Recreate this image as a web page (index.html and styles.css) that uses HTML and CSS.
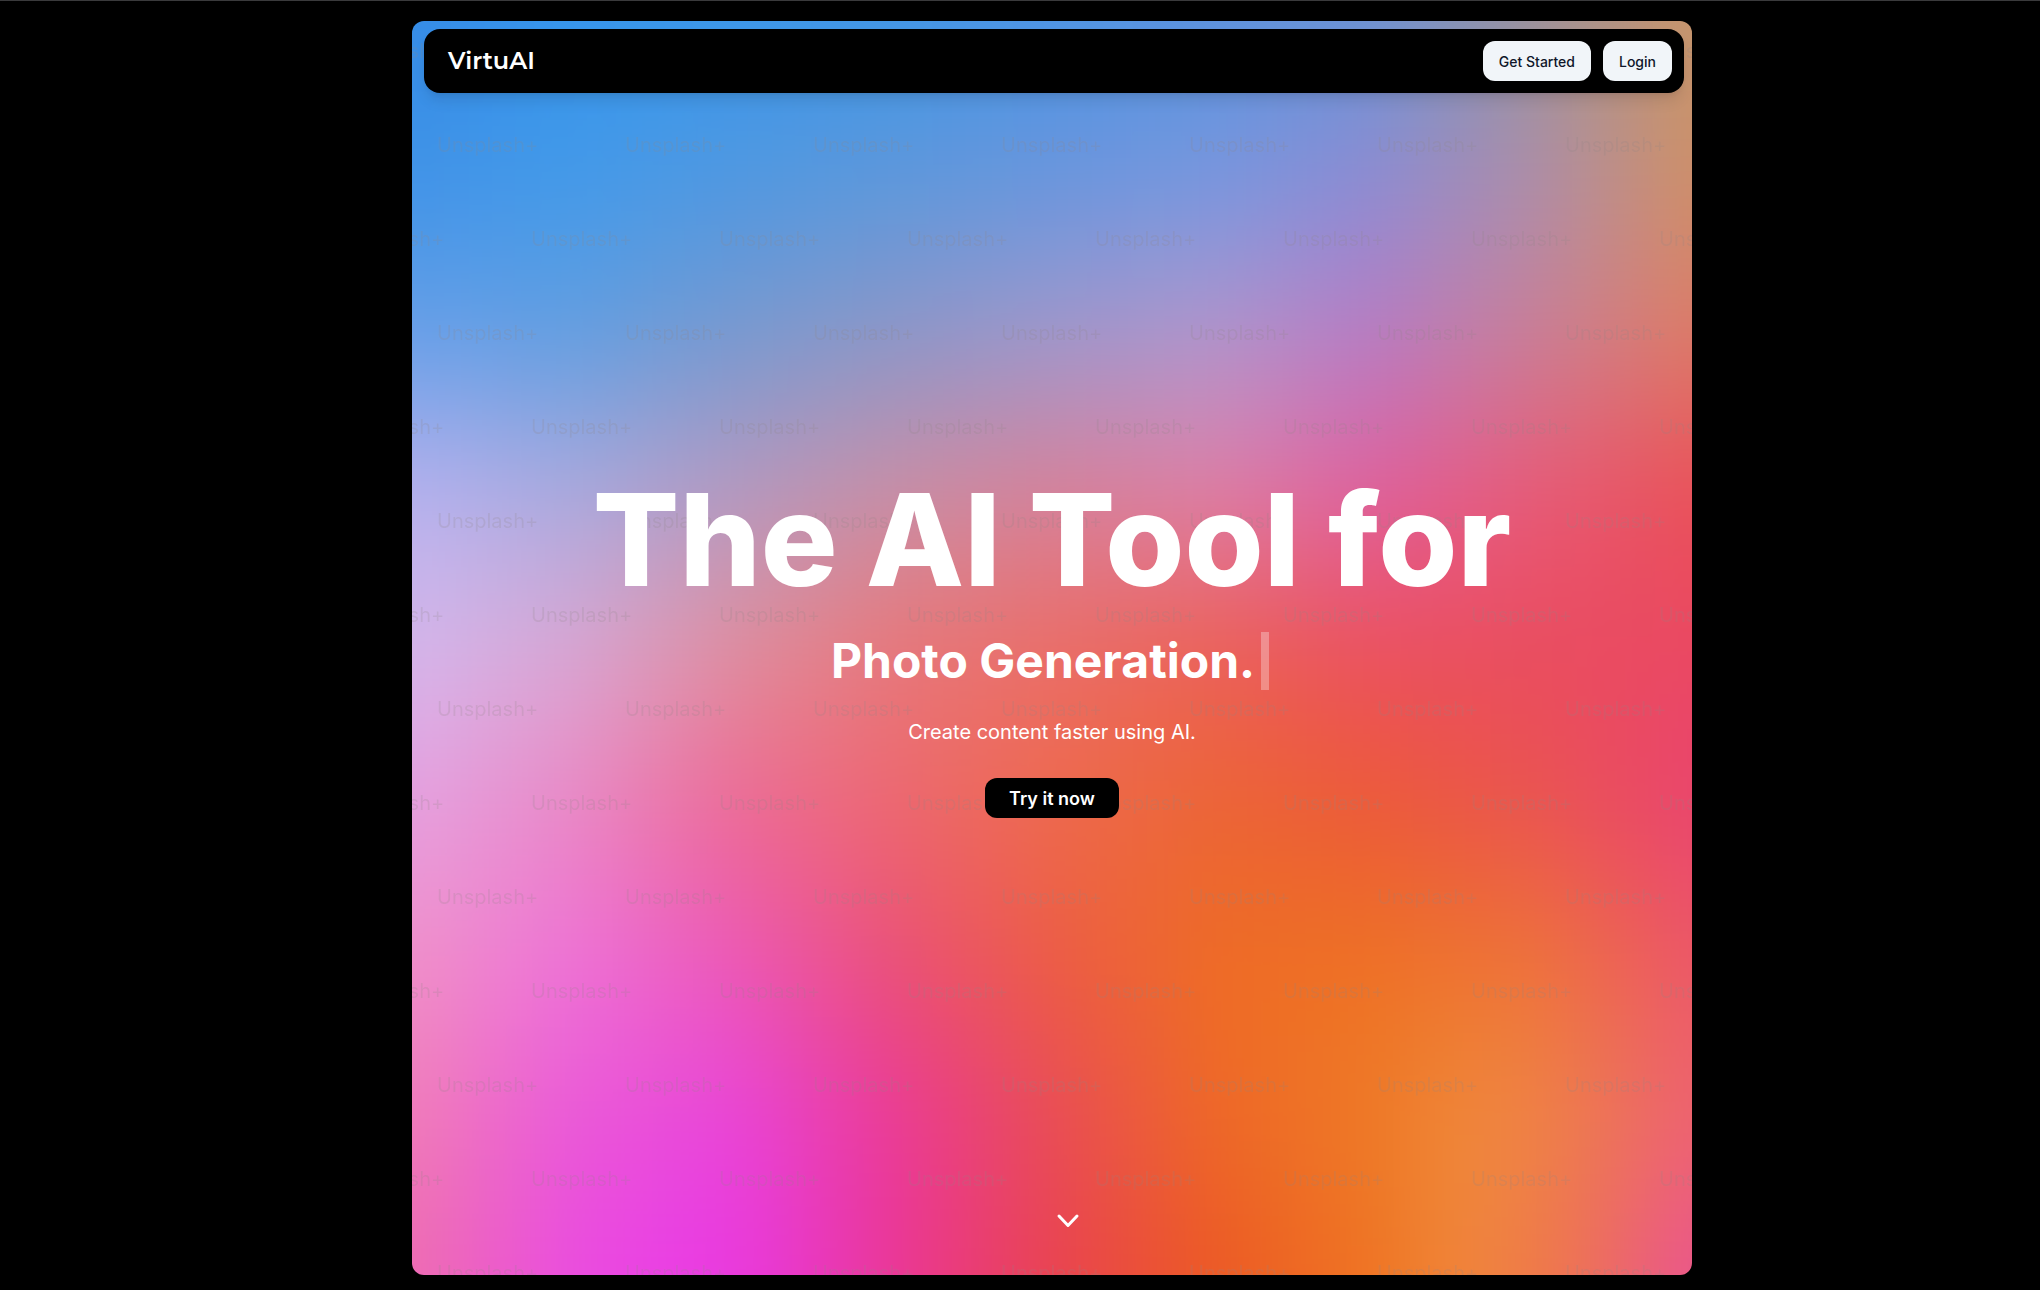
FILE: index.html
```html
<!DOCTYPE html>
<html lang="en">
<head>
<meta charset="utf-8">
<meta name="viewport" content="width=device-width, initial-scale=1">
<title>VirtuAI</title>
<link rel="stylesheet" href="styles.css">
</head>
<body>
<div class="panel">
  <svg class="backdrop" aria-hidden="true">
    <defs>
      <linearGradient id="r0" gradientUnits="userSpaceOnUse" x1="0" x2="800"><stop offset="0" stop-color="#358be6"/><stop offset=".125" stop-color="#3595ec"/><stop offset=".25" stop-color="#3b97ea"/><stop offset=".375" stop-color="#4096e6"/><stop offset=".5" stop-color="#4c94e4"/><stop offset=".625" stop-color="#5a93dd"/><stop offset=".75" stop-color="#6a93d4"/><stop offset=".875" stop-color="#9a9399"/><stop offset="1" stop-color="#c8956a"/></linearGradient>
      <linearGradient id="r1" gradientUnits="userSpaceOnUse" x1="0" x2="800"><stop offset="0" stop-color="#3f93e8"/><stop offset=".125" stop-color="#429aea"/><stop offset=".25" stop-color="#4e98e2"/><stop offset=".375" stop-color="#5c98dc"/><stop offset=".5" stop-color="#6896de"/><stop offset=".625" stop-color="#7697e0"/><stop offset=".75" stop-color="#8c8cd4"/><stop offset=".875" stop-color="#ac8eac"/><stop offset="1" stop-color="#ce9068"/></linearGradient>
      <linearGradient id="r2" gradientUnits="userSpaceOnUse" x1="0" x2="800"><stop offset="0" stop-color="#669fe8"/><stop offset=".125" stop-color="#629ee0"/><stop offset=".25" stop-color="#7899cf"/><stop offset=".375" stop-color="#8c97c8"/><stop offset=".5" stop-color="#a098cc"/><stop offset=".625" stop-color="#b296cc"/><stop offset=".75" stop-color="#b87cc4"/><stop offset=".875" stop-color="#c98098"/><stop offset="1" stop-color="#dd7c68"/></linearGradient>
      <linearGradient id="r3" gradientUnits="userSpaceOnUse" x1="0" x2="800"><stop offset="0" stop-color="#b8b2ee"/><stop offset=".125" stop-color="#aaaade"/><stop offset=".25" stop-color="#b49ac2"/><stop offset=".375" stop-color="#c990a8"/><stop offset=".5" stop-color="#d7829b"/><stop offset=".625" stop-color="#df7fa8"/><stop offset=".75" stop-color="#e0609f"/><stop offset=".875" stop-color="#e85a78"/><stop offset="1" stop-color="#ea5058"/></linearGradient>
      <linearGradient id="r4" gradientUnits="userSpaceOnUse" x1="0" x2="800"><stop offset="0" stop-color="#d5b8ec"/><stop offset=".125" stop-color="#d9a8d4"/><stop offset=".25" stop-color="#e0909f"/><stop offset=".375" stop-color="#e8787a"/><stop offset=".5" stop-color="#eb6d68"/><stop offset=".625" stop-color="#ec6058"/><stop offset=".75" stop-color="#ec5060"/><stop offset=".875" stop-color="#ea4c60"/><stop offset="1" stop-color="#ea4862"/></linearGradient>
      <linearGradient id="r5" gradientUnits="userSpaceOnUse" x1="0" x2="800"><stop offset="0" stop-color="#e6a0e0"/><stop offset=".125" stop-color="#ea88c4"/><stop offset=".25" stop-color="#ed6a95"/><stop offset=".375" stop-color="#ed6870"/><stop offset=".5" stop-color="#ee6a4c"/><stop offset=".625" stop-color="#ec6535"/><stop offset=".75" stop-color="#ec5a38"/><stop offset=".875" stop-color="#ea5450"/><stop offset="1" stop-color="#ea4470"/></linearGradient>
      <linearGradient id="r6" gradientUnits="userSpaceOnUse" x1="0" x2="800"><stop offset="0" stop-color="#f090c8"/><stop offset=".125" stop-color="#ee72d8"/><stop offset=".25" stop-color="#ec58b8"/><stop offset=".375" stop-color="#ea5078"/><stop offset=".5" stop-color="#ec5c44"/><stop offset=".625" stop-color="#ee6c24"/><stop offset=".75" stop-color="#ee7224"/><stop offset=".875" stop-color="#ee7438"/><stop offset="1" stop-color="#ec5868"/></linearGradient>
      <linearGradient id="r7" gradientUnits="userSpaceOnUse" x1="0" x2="800"><stop offset="0" stop-color="#f07cb8"/><stop offset=".125" stop-color="#ea58d8"/><stop offset=".25" stop-color="#e944da"/><stop offset=".375" stop-color="#ea3a98"/><stop offset=".5" stop-color="#e94c58"/><stop offset=".625" stop-color="#ee6828"/><stop offset=".75" stop-color="#ee7a26"/><stop offset=".83" stop-color="#f08a3c"/><stop offset=".9" stop-color="#ee7e4c"/><stop offset="1" stop-color="#ee6470"/></linearGradient>
      <linearGradient id="r8" gradientUnits="userSpaceOnUse" x1="0" x2="800"><stop offset="0" stop-color="#ee6cb0"/><stop offset=".125" stop-color="#ea4ce0"/><stop offset=".22" stop-color="#ea3ae6"/><stop offset=".28" stop-color="#e838d4"/><stop offset=".375" stop-color="#ea3698"/><stop offset=".5" stop-color="#e94250"/><stop offset=".625" stop-color="#ec5824"/><stop offset=".75" stop-color="#ef7422"/><stop offset=".82" stop-color="#f0863a"/><stop offset=".9" stop-color="#ee7450"/><stop offset="1" stop-color="#ea5590"/></linearGradient>
      <filter id="blend" filterUnits="userSpaceOnUse" x="-100" y="-200" width="1000" height="1200" color-interpolation-filters="sRGB"><feGaussianBlur stdDeviation="20 44"/></filter>
      <pattern id="marks" width="188" height="188" patternUnits="userSpaceOnUse">
        <g class="mark">
          <text x="25" y="131">Unsplash+</text>
          <text x="119" y="37">Unsplash+</text>
          <text x="-69" y="37">Unsplash+</text>
        </g>
      </pattern>
    </defs>
    <svg width="100%" height="100%" viewBox="0 0 800 800" preserveAspectRatio="none">
      <g filter="url(#blend)">
        <rect x="-100" y="-200" width="1000" height="250" fill="url(#r0)"/>
        <rect x="-100" y="50" width="1000" height="100" fill="url(#r1)"/>
        <rect x="-100" y="150" width="1000" height="100" fill="url(#r2)"/>
        <rect x="-100" y="250" width="1000" height="100" fill="url(#r3)"/>
        <rect x="-100" y="350" width="1000" height="100" fill="url(#r4)"/>
        <rect x="-100" y="450" width="1000" height="100" fill="url(#r5)"/>
        <rect x="-100" y="550" width="1000" height="100" fill="url(#r6)"/>
        <rect x="-100" y="650" width="1000" height="100" fill="url(#r7)"/>
        <rect x="-100" y="750" width="1000" height="250" fill="url(#r8)"/>
      </g>
    </svg>
    <rect width="100%" height="100%" fill="url(#marks)"/>
  </svg>
  <header class="nav">
    <a class="logo" href="#">VirtuAI</a>
    <nav class="actions">
      <button class="btn btn-light" type="button">Get Started</button>
      <button class="btn btn-light" type="button">Login</button>
    </nav>
  </header>
  <main class="hero">
    <h1 class="title">The AI Tool for</h1>
    <p class="typed">Photo Generation.<span class="cursor"></span></p>
    <p class="lead">Create content faster using AI.</p>
    <button class="btn btn-dark" type="button">Try it now</button>
  </main>
  <a class="scroll" href="#more" aria-label="Scroll down">
    <svg width="24" height="16" viewBox="0 0 24 16" fill="none" stroke="#fff" stroke-width="3" stroke-linecap="round" stroke-linejoin="round"><path d="M3 3l9 9.500 9-9.500"/></svg>
  </a>
</div>
</body>
</html>
```
FILE: styles.css
```css
* { box-sizing: border-box; }
html, body { margin: 0; }
body {
  min-height: 100vh;
  display: flex;
  flex-direction: column;
  padding: 20px 16px 15px 80px;
  border-top: 1px solid #3a3a3c;
  background: #000;
  color: #fff;
  font-family: Inter, "Liberation Sans", sans-serif;
}
.panel {
  position: relative;
  flex: 1;
  display: flex;
  flex-direction: column;
  width: 100%;
  max-width: 1280px;
  margin: 0 auto;
  padding: 8px 8px 46px;
  border-radius: 12px;
  overflow: hidden;
}
.backdrop { position: absolute; inset: 0; width: 100%; height: 100%; }
.mark {
  font: 400 20px Inter, sans-serif;
  fill: #8c8080;
  fill-opacity: .2;
}
.nav {
  position: relative;
  display: flex;
  align-items: center;
  justify-content: space-between;
  height: 64px;
  margin-left: 4px;
  padding: 0 12px 0 24px;
  border-radius: 16px;
  background: #000;
  box-shadow: 0 10px 15px -3px rgba(0, 0, 0, .1), 0 4px 6px -4px rgba(0, 0, 0, .1);
}
.logo {
  color: #fff;
  font: 600 24px/32px Montserrat, Inter, sans-serif;
  text-decoration: none;
}
.actions { display: flex; gap: 12px; }
.btn {
  height: 40px;
  border: 0;
  border-radius: 12px;
  font-family: inherit;
  cursor: pointer;
}
.btn-light {
  padding: 0 16px;
  background: #f1f5f9;
  color: #0f172a;
  font-size: 14px;
  font-weight: 500;
}
.btn-dark {
  padding: 0 24px;
  background: #000;
  color: #fff;
  font-size: 18px;
  font-weight: 600;
}
.hero {
  position: relative;
  flex: 1;
  display: flex;
  flex-direction: column;
  align-items: center;
  justify-content: center;
  padding-bottom: 12px;
  text-align: center;
}
.title { margin: 0; font-size: 128px; line-height: 128px; font-weight: 800; }
.typed {
  display: flex;
  gap: 6px;
  margin: 28px 0 0;
  padding-right: 4px;
  font-size: 48px;
  line-height: 58px;
  font-weight: 700;
}
.cursor { width: 8px; background: rgba(255, 255, 255, .3); }
.lead { margin: 28px 0 32px; font-size: 20px; line-height: 28px; }
.scroll { position: relative; display: flex; justify-content: center; padding-left: 32px; }
```
